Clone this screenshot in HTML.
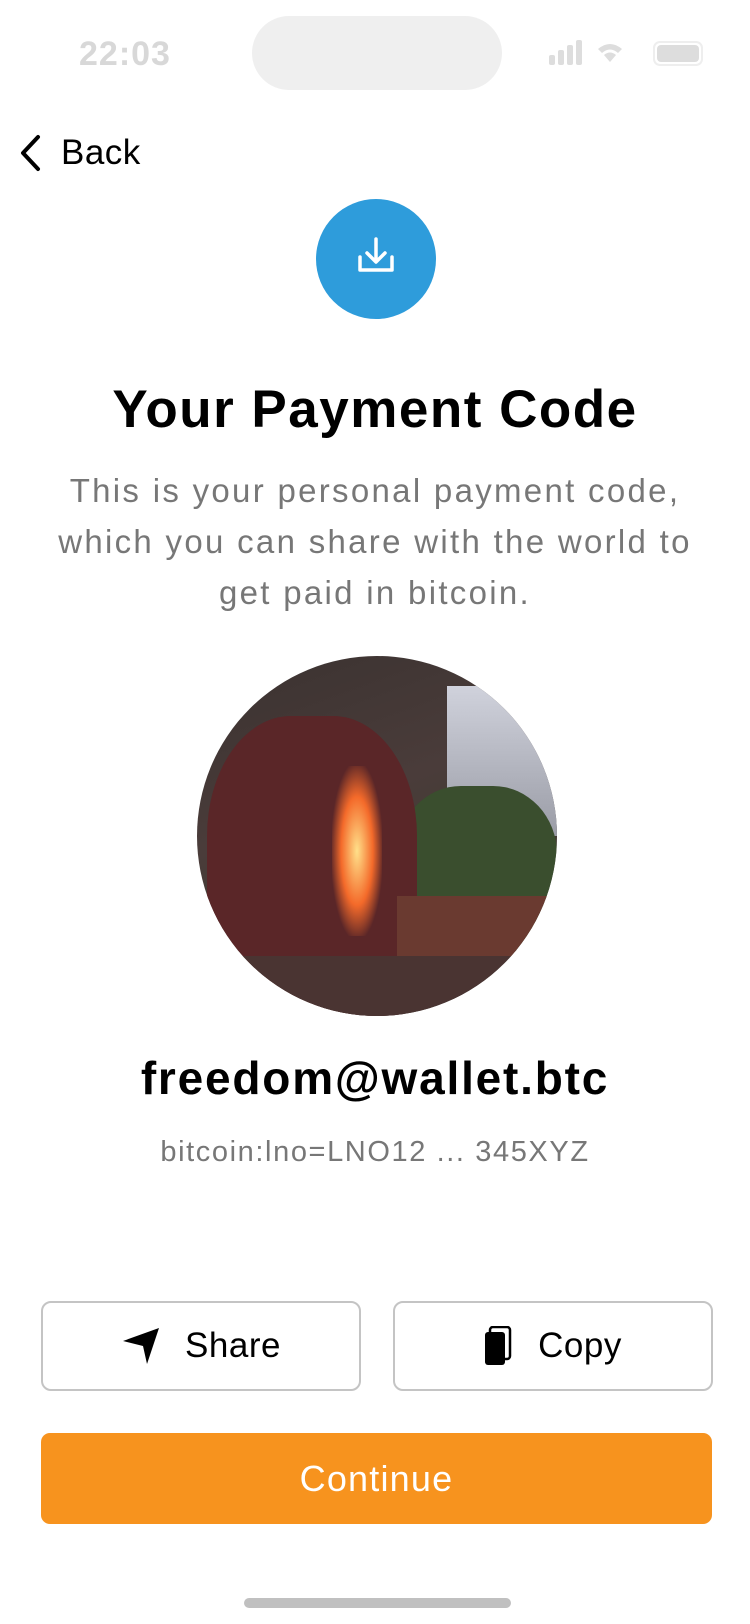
<!DOCTYPE html>
<html><head><meta charset="utf-8"><style>
*{margin:0;padding:0;box-sizing:border-box}
body{width:750px;height:1624px;background:#fff;font-family:"Liberation Sans",sans-serif;position:relative;overflow:hidden}
.abs{position:absolute}
.c{left:0;width:750px;text-align:center;white-space:nowrap}
.btn{position:absolute;top:1301px;height:90px;width:320px;border:2px solid #c4c4c4;border-radius:10px;display:flex;align-items:center;justify-content:center;font-size:35px;color:#000;letter-spacing:0.5px}
</style></head><body>
<div class="abs" style="left:79px;top:35px;font-size:34px;font-weight:bold;color:#d8d8d8;letter-spacing:1px">22:03</div>
<div class="abs" style="left:252px;top:16px;width:250px;height:74px;border-radius:37px;background:#efefef"></div>
<svg class="abs" style="left:548px;top:40px" width="160" height="30">
<rect x="1" y="15" width="6" height="10" rx="2" fill="#ddd"/><rect x="10" y="10" width="6" height="15" rx="2" fill="#ddd"/><rect x="19" y="5" width="6" height="20" rx="2" fill="#ddd"/><rect x="28" y="0" width="6" height="25" rx="2" fill="#ddd"/>
<path d="M50 9 Q62 -1 74 9 L70 13 Q62 6 54 13Z M56 15 Q62 10 68 15 L62 22Z" fill="#ddd"/>
<rect x="106" y="2" width="48" height="23" rx="6" fill="none" stroke="#eee" stroke-width="2"/><rect x="109" y="5" width="42" height="17" rx="4" fill="#ddd"/>
</svg>
<svg class="abs" style="left:18px;top:134px" width="24" height="38"><path d="M20 3 L5 19 L20 35" fill="none" stroke="#000" stroke-width="4" stroke-linecap="round" stroke-linejoin="round"/></svg>
<div class="abs" style="left:61px;top:133px;font-size:35px;color:#000;letter-spacing:0.5px">Back</div>
<div class="abs" style="left:316px;top:199px;width:120px;height:120px;border-radius:50%;background:#2e9cdb"></div>
<svg class="abs" style="left:352px;top:233px" width="48" height="48"><path d="M24 6 V28 M15 20 L24 29 L33 20 M8 24 V37 H40 V24" fill="none" stroke="#fff" stroke-width="3.5" stroke-linecap="round" stroke-linejoin="round"/></svg>
<div class="abs c" style="top:379px;font-size:53px;font-weight:bold;color:#000;letter-spacing:1.5px">Your Payment Code</div>
<div class="abs c" style="top:465px;font-size:33px;line-height:51px;color:#777;letter-spacing:2.3px">This is your personal payment code,<br>which you can share with the world to<br>get paid in bitcoin.</div>
<div class="abs" style="left:197px;top:656px;width:360px;height:360px;border-radius:50%;overflow:hidden;background:linear-gradient(160deg,#3a3230 0%,#4a3c3a 40%,#3e3a30 70%,#2b2a22 100%)">
<div class="abs" style="left:250px;top:30px;width:120px;height:150px;background:linear-gradient(180deg,#d0d2dc,#9a9ca6)"></div>
<div class="abs" style="left:200px;top:130px;width:160px;height:170px;background:#3a4e2e;border-radius:40%"></div>
<div class="abs" style="left:10px;top:60px;width:210px;height:300px;background:#5a2628;border-radius:40% 40% 10% 10%"></div>
<div class="abs" style="left:135px;top:110px;width:50px;height:170px;background:radial-gradient(ellipse,#ffe08a 0%,#f46a2a 45%,rgba(160,30,30,0) 75%)"></div>
<div class="abs" style="left:0;top:300px;width:360px;height:60px;background:#4a3432"></div>
<div class="abs" style="left:200px;top:240px;width:150px;height:60px;background:#6a3a30"></div>
</div>
<div class="abs c" style="top:1051px;font-size:46px;font-weight:bold;color:#000;letter-spacing:1.8px">freedom@wallet.btc</div>
<div class="abs c" style="top:1136px;font-size:29px;color:#777;letter-spacing:1.6px">bitcoin:lno=LNO12 ... 345XYZ</div>
<div class="btn" style="left:41px"><svg width="40" height="40" style="margin-right:24px"><path d="M2 15 L38 2 L26 38 L22 20Z" fill="#000"/></svg>Share</div>
<div class="btn" style="left:393px"><svg width="30" height="40" style="margin-right:24px"><rect x="6" y="1" width="20" height="32" rx="3" fill="none" stroke="#000" stroke-width="2.5"/><rect x="1" y="6" width="20" height="33" rx="3" fill="#000"/></svg>Copy</div>
<div class="abs" style="left:41px;top:1433px;width:671px;height:91px;border-radius:9px;background:#f7931e;color:#fff;font-size:36px;letter-spacing:1.2px;display:flex;align-items:center;justify-content:center">Continue</div>
<div class="abs" style="left:244px;top:1598px;width:267px;height:10px;border-radius:5px;background:#c0c0c0"></div>
</body></html>
